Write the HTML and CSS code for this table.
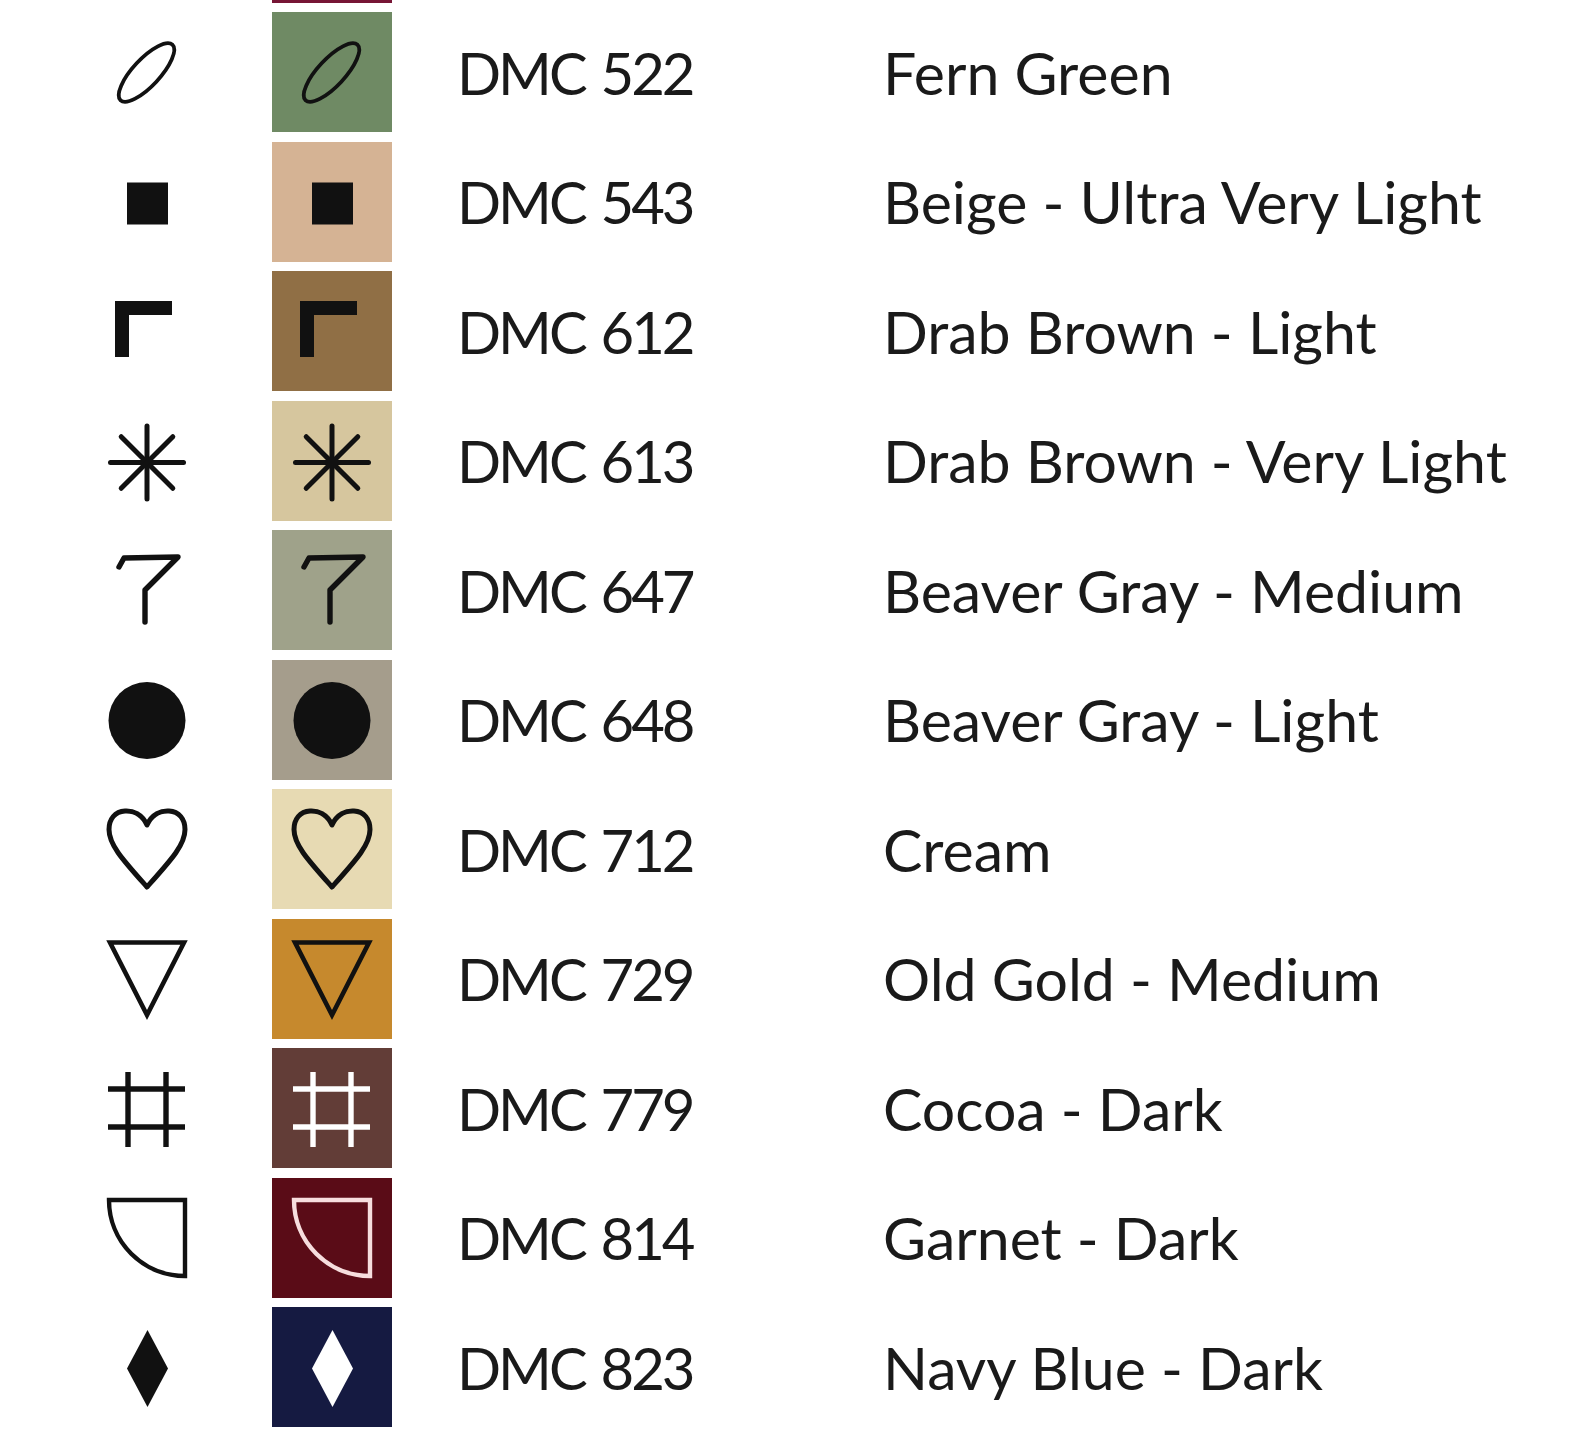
FILE: index.html
```html
<!DOCTYPE html>
<html lang="en">
<head>
<meta charset="utf-8">
<title>DMC Thread Key</title>
<link rel="stylesheet" href="styles.css">
</head>
<body>
<svg class="defs" aria-hidden="true">
  <symbol id="s-oval" viewBox="0 0 90 90">
    <ellipse cx="44.5" cy="45.5" rx="38" ry="13.5" transform="rotate(-47 44.5 45.5)" fill="none" stroke="currentColor" stroke-width="3.8"/>
  </symbol>
  <symbol id="s-square" viewBox="0 0 90 90">
    <rect x="25" y="25.5" width="41" height="42" fill="currentColor"/>
  </symbol>
  <symbol id="s-corner" viewBox="0 0 90 90">
    <path d="M13 15 H70 V29 H27 V71 H13 Z" fill="currentColor"/>
  </symbol>
  <symbol id="s-star" viewBox="0 0 90 90">
    <g stroke="currentColor" stroke-width="5" stroke-linecap="round">
      <line x1="8.5" y1="46.5" x2="81.5" y2="46.5"/>
      <line x1="45" y1="10" x2="45" y2="83"/>
      <line x1="19.2" y1="20.7" x2="70.8" y2="72.3"/>
      <line x1="19.2" y1="72.3" x2="70.8" y2="20.7"/>
    </g>
  </symbol>
  <symbol id="s-seven" viewBox="0 0 90 90">
    <path d="M17 22 L22 13 L76 12 L43 45 L43 77" fill="none" stroke="currentColor" stroke-width="5.4" stroke-linejoin="round" stroke-linecap="round"/>
  </symbol>
  <symbol id="s-dot" viewBox="0 0 90 90">
    <circle cx="45" cy="45.5" r="38.5" fill="currentColor"/>
  </symbol>
  <symbol id="s-heart" viewBox="0 0 90 90">
    <path d="M45 21 C40 10 31 6.5 23 7 C13 7.5 7 15 7 25.5 C7 41 21 56 45 83 C69 56 83 41 83 25.5 C83 15 77 7.5 67 7 C59 6.5 50 10 45 21 Z" fill="none" stroke="currentColor" stroke-width="5" stroke-linejoin="round"/>
  </symbol>
  <symbol id="s-tri" viewBox="0 0 90 90">
    <path d="M8 8.5 H82 L45 81 Z" fill="none" stroke="currentColor" stroke-width="4.6"/>
  </symbol>
  <symbol id="s-hash" viewBox="0 0 90 90">
    <g stroke="currentColor" stroke-width="5.4">
      <line x1="26" y1="9" x2="26" y2="84"/>
      <line x1="64" y1="9" x2="64" y2="84"/>
      <line x1="6" y1="26" x2="83" y2="26"/>
      <line x1="6" y1="64" x2="83" y2="64"/>
    </g>
  </symbol>
  <symbol id="s-quarter" viewBox="0 0 90 90">
    <path d="M7 7 H83 V83 A76 76 0 0 1 7 7 Z" fill="none" stroke="currentColor" stroke-width="4.4"/>
  </symbol>
  <symbol id="s-diamond" viewBox="0 0 90 90">
    <polygon points="45.5,8 66,46.5 45.5,85 25,46.5" fill="currentColor"/>
  </symbol>
</svg>

<div class="chart">
  <div class="row cut"><div class="sw c-816"></div></div>

  <div class="row">
    <div class="sym"><svg><use href="#s-oval"/></svg></div>
    <div class="sw c-522"><svg><use href="#s-oval"/></svg></div>
    <div class="code">DMC 522</div>
    <div class="name">Fern Green</div>
  </div>

  <div class="row">
    <div class="sym"><svg><use href="#s-square"/></svg></div>
    <div class="sw c-543"><svg><use href="#s-square"/></svg></div>
    <div class="code">DMC 543</div>
    <div class="name">Beige - Ultra Very Light</div>
  </div>

  <div class="row">
    <div class="sym"><svg><use href="#s-corner"/></svg></div>
    <div class="sw c-612"><svg><use href="#s-corner"/></svg></div>
    <div class="code">DMC 612</div>
    <div class="name">Drab Brown - Light</div>
  </div>

  <div class="row">
    <div class="sym"><svg><use href="#s-star"/></svg></div>
    <div class="sw c-613"><svg><use href="#s-star"/></svg></div>
    <div class="code">DMC 613</div>
    <div class="name">Drab Brown - Very Light</div>
  </div>

  <div class="row">
    <div class="sym"><svg><use href="#s-seven"/></svg></div>
    <div class="sw c-647"><svg><use href="#s-seven"/></svg></div>
    <div class="code">DMC 647</div>
    <div class="name">Beaver Gray - Medium</div>
  </div>

  <div class="row">
    <div class="sym"><svg><use href="#s-dot"/></svg></div>
    <div class="sw c-648"><svg><use href="#s-dot"/></svg></div>
    <div class="code">DMC 648</div>
    <div class="name">Beaver Gray - Light</div>
  </div>

  <div class="row">
    <div class="sym"><svg><use href="#s-heart"/></svg></div>
    <div class="sw c-712"><svg><use href="#s-heart"/></svg></div>
    <div class="code">DMC 712</div>
    <div class="name">Cream</div>
  </div>

  <div class="row">
    <div class="sym"><svg><use href="#s-tri"/></svg></div>
    <div class="sw c-729"><svg><use href="#s-tri"/></svg></div>
    <div class="code">DMC 729</div>
    <div class="name">Old Gold - Medium</div>
  </div>

  <div class="row">
    <div class="sym"><svg><use href="#s-hash"/></svg></div>
    <div class="sw c-779 inv"><svg><use href="#s-hash"/></svg></div>
    <div class="code">DMC 779</div>
    <div class="name">Cocoa - Dark</div>
  </div>

  <div class="row">
    <div class="sym"><svg><use href="#s-quarter"/></svg></div>
    <div class="sw c-814 pink"><svg><use href="#s-quarter"/></svg></div>
    <div class="code">DMC 814</div>
    <div class="name">Garnet - Dark</div>
  </div>

  <div class="row">
    <div class="sym"><svg><use href="#s-diamond"/></svg></div>
    <div class="sw c-823 inv"><svg><use href="#s-diamond"/></svg></div>
    <div class="code">DMC 823</div>
    <div class="name">Navy Blue - Dark</div>
  </div>
</div>
</body>
</html>
```
FILE: styles.css
```css
html, body {
  margin: 0;
  background: #ffffff;
}

body {
  font-family: Lato, "Noto Sans", sans-serif;
  color: #1a1a1a;
}

.defs {
  display: block;
  width: 0;
  height: 0;
  overflow: hidden;
}

.chart {
  display: flex;
  flex-direction: column;
  gap: 9.5px;
}

.row {
  display: flex;
  align-items: center;
  height: 120px;
  padding-left: 102px;
}

.row.cut {
  height: 2.5px;
  overflow: hidden;
}

.row.cut .sw {
  height: 2.5px;
  margin-left: 170px;
}

.sym {
  flex: none;
  width: 90px;
  height: 90px;
  color: #111111;
}

.sym svg,
.sw svg {
  display: block;
  width: 90px;
  height: 90px;
}

.sw {
  flex: none;
  width: 120px;
  height: 120px;
  margin-left: 80px;
  display: flex;
  align-items: center;
  justify-content: center;
  color: #111111;
}

.sw.inv {
  color: #ffffff;
}

.sw.pink {
  color: #f7dede;
}

.code {
  flex: none;
  width: 426px;
  margin-left: 65px;
  font-size: 58px;
  letter-spacing: -3px;
  word-spacing: 4px;
  white-space: nowrap;
}

.name {
  font-size: 59px;
  white-space: nowrap;
}

.c-816 { background: #771535; }
.c-522 { background: #6f8a64; }
.c-543 { background: #d5b394; }
.c-612 { background: #906f45; }
.c-613 { background: #d6c69e; }
.c-647 { background: #9fa28a; }
.c-648 { background: #a59d8c; }
.c-712 { background: #e7dab3; }
.c-729 { background: #c6892d; }
.c-779 { background: #623d37; }
.c-814 { background: #5a0c17; }
.c-823 { background: #151a41; }
```
